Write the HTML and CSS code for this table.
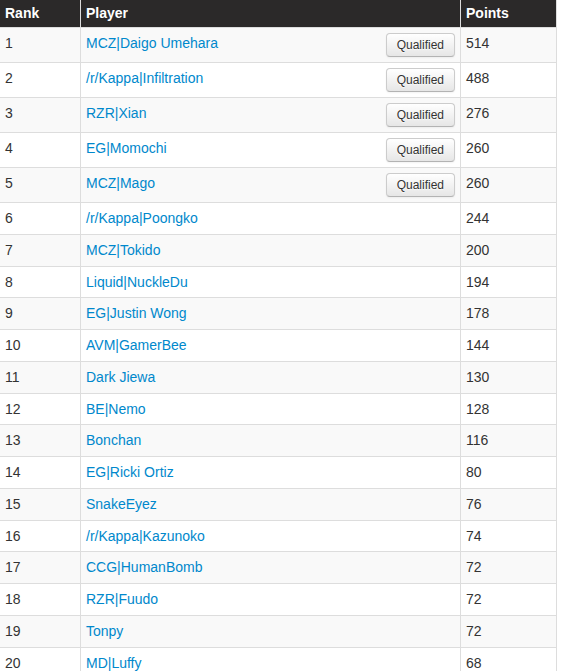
FILE: index.html
```html
<!DOCTYPE html>
<html>
<head>
<meta charset="utf-8">
<link rel="stylesheet" href="styles.css">
</head>
<body>
<table class="ranking">
  <thead>
    <tr>
      <th class="col-rank">Rank</th>
      <th class="col-player">Player</th>
      <th class="col-points">Points</th>
    </tr>
  </thead>
  <tbody>
    <tr class="q"><td>1</td><td><div class="player"><a href="#">MCZ|Daigo Umehara</a><span class="btn">Qualified</span></div></td><td>514</td></tr>
    <tr class="q"><td>2</td><td><div class="player"><a href="#">/r/Kappa|Infiltration</a><span class="btn">Qualified</span></div></td><td>488</td></tr>
    <tr class="q"><td>3</td><td><div class="player"><a href="#">RZR|Xian</a><span class="btn">Qualified</span></div></td><td>276</td></tr>
    <tr class="q"><td>4</td><td><div class="player"><a href="#">EG|Momochi</a><span class="btn">Qualified</span></div></td><td>260</td></tr>
    <tr class="q"><td>5</td><td><div class="player"><a href="#">MCZ|Mago</a><span class="btn">Qualified</span></div></td><td>260</td></tr>
    <tr><td>6</td><td><a href="#">/r/Kappa|Poongko</a></td><td>244</td></tr>
    <tr><td>7</td><td><a href="#">MCZ|Tokido</a></td><td>200</td></tr>
    <tr><td>8</td><td><a href="#">Liquid|NuckleDu</a></td><td>194</td></tr>
    <tr><td>9</td><td><a href="#">EG|Justin Wong</a></td><td>178</td></tr>
    <tr><td>10</td><td><a href="#">AVM|GamerBee</a></td><td>144</td></tr>
    <tr><td>11</td><td><a href="#">Dark Jiewa</a></td><td>130</td></tr>
    <tr><td>12</td><td><a href="#">BE|Nemo</a></td><td>128</td></tr>
    <tr><td>13</td><td><a href="#">Bonchan</a></td><td>116</td></tr>
    <tr><td>14</td><td><a href="#">EG|Ricki Ortiz</a></td><td>80</td></tr>
    <tr><td>15</td><td><a href="#">SnakeEyez</a></td><td>76</td></tr>
    <tr><td>16</td><td><a href="#">/r/Kappa|Kazunoko</a></td><td>74</td></tr>
    <tr><td>17</td><td><a href="#">CCG|HumanBomb</a></td><td>72</td></tr>
    <tr><td>18</td><td><a href="#">RZR|Fuudo</a></td><td>72</td></tr>
    <tr><td>19</td><td><a href="#">Tonpy</a></td><td>72</td></tr>
    <tr><td>20</td><td><a href="#">MD|Luffy</a></td><td>68</td></tr>
  </tbody>
</table>
</body>
</html>
```

FILE: styles.css
```css
html, body {
  margin: 0;
  padding: 0;
  background: #fff;
}

body {
  font-family: "Liberation Sans", Arial, Helvetica, sans-serif;
  font-size: 14px;
  color: #333;
}

.ranking {
  width: 557px;
  border-collapse: separate;
  border-spacing: 0;
  border-right: 1px solid #ddd;
  table-layout: fixed;
}

.ranking th,
.ranking td {
  box-sizing: border-box;
  text-align: left;
  vertical-align: top;
  padding: 5px 5px;
  line-height: 20.75px;
}

.ranking th + th,
.ranking td + td {
  border-left: 1px solid #ddd;
}

.ranking th {
  background: #2b2929;
  color: #fff;
  font-weight: bold;
  padding: 3px 5px 4px;
  line-height: 20px;
}

.col-rank { width: 80px; }
.col-player { width: 380px; }
.col-points { width: 96px; }

.ranking td {
  border-top: 1px solid #ddd;
}

.ranking tbody tr:nth-child(odd) td {
  background: #f9f9f9;
}

.ranking a {
  color: #0088cc;
  text-decoration: none;
}

.player {
  display: flex;
  justify-content: space-between;
  align-items: flex-start;
}

.btn {
  display: inline-block;
  box-sizing: border-box;
  height: 24px;
  padding: 4px 10px;
  font-size: 12px;
  line-height: 14px;
  color: #333;
  text-shadow: 0 1px 1px rgba(255, 255, 255, 0.75);
  background-color: #f5f5f5;
  background-image: linear-gradient(to bottom, #ffffff, #e6e6e6);
  border: 1px solid #cccccc;
  border-bottom-color: #b3b3b3;
  border-radius: 4px;
  box-shadow: inset 0 1px 0 rgba(255, 255, 255, 0.2), 0 1px 2px rgba(0, 0, 0, 0.05);
}
```
